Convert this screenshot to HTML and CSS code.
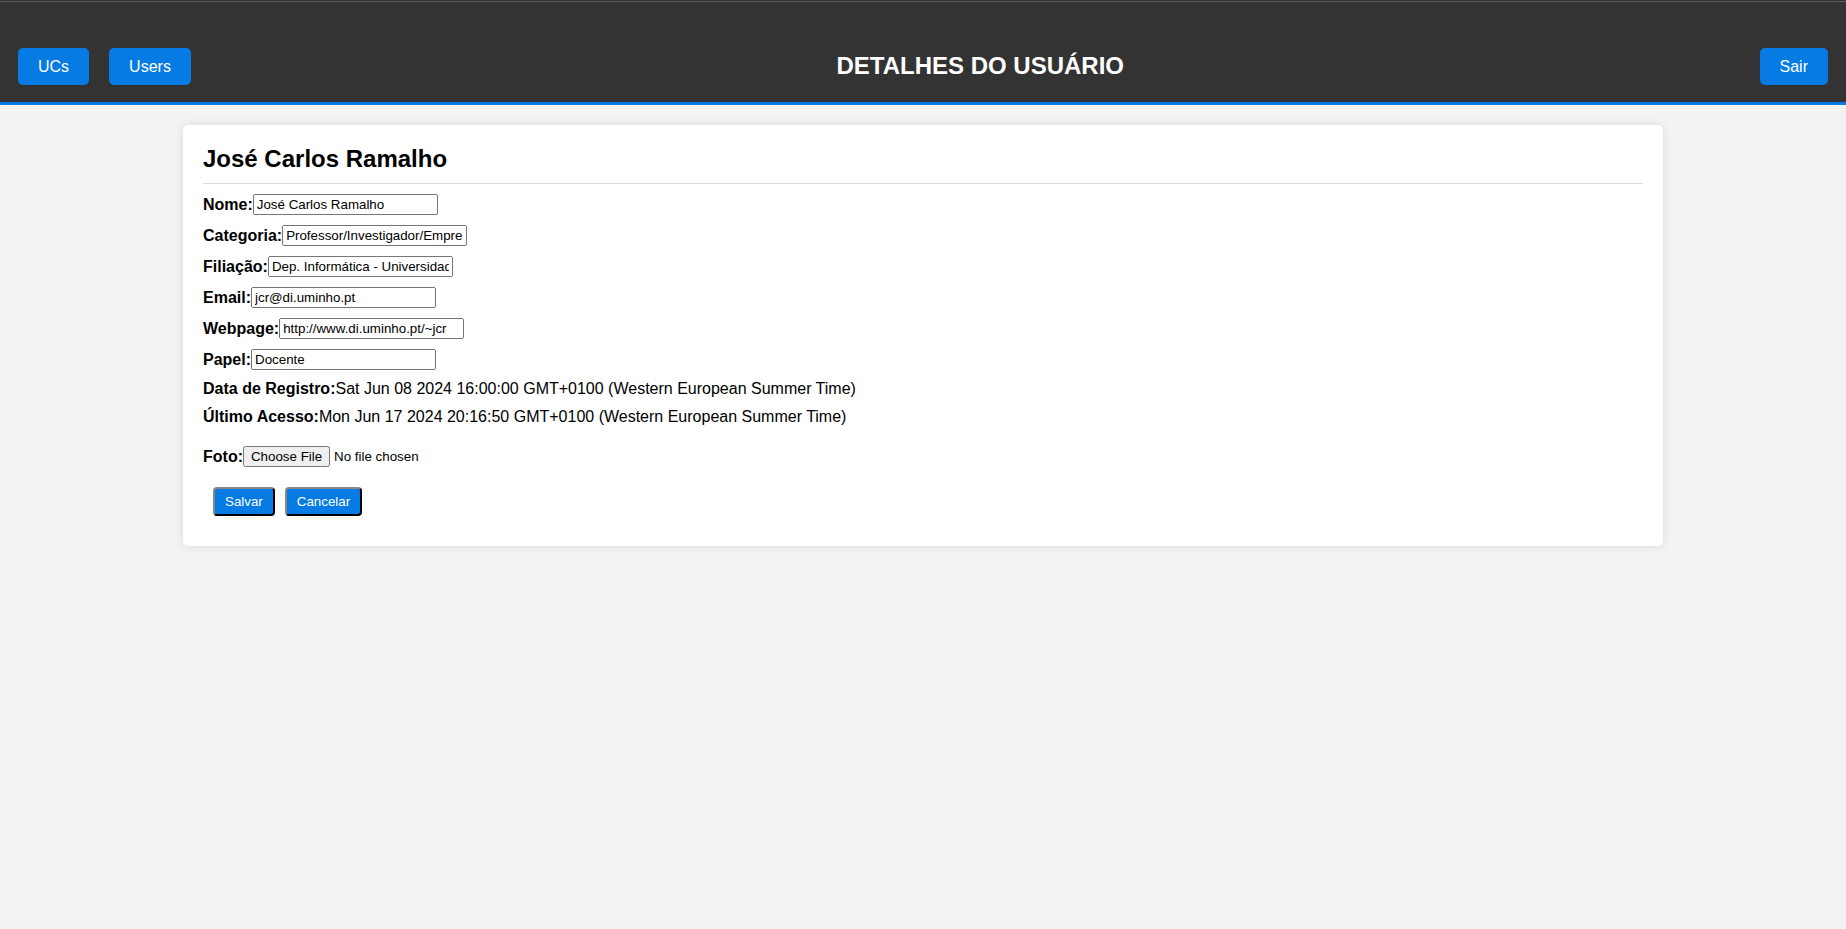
FILE: index.html
```html
<!DOCTYPE html>
<html lang="pt">
<head>
<meta charset="utf-8">
<title>Detalhes do Usuário</title>
<link rel="stylesheet" href="styles.css">
</head>
<body>
<header class="topbar">
  <div class="nav-group">
    <button class="nav-btn">UCs</button>
    <button class="nav-btn">Users</button>
  </div>
  <h1 class="page-title">DETALHES DO USUÁRIO</h1>
  <div class="nav-group">
    <button class="nav-btn">Sair</button>
  </div>
</header>
<main class="card">
  <h2 class="user-name">José Carlos Ramalho</h2>
  <form class="user-form">
    <div class="row"><label class="lbl">Nome:</label><input type="text" value="José Carlos Ramalho"></div>
    <div class="row"><label class="lbl">Categoria:</label><input type="text" value="Professor/Investigador/Empresário"></div>
    <div class="row"><label class="lbl">Filiação:</label><input type="text" value="Dep. Informática - Universidade do Minho"></div>
    <div class="row"><label class="lbl">Email:</label><input type="text" value="jcr@di.uminho.pt"></div>
    <div class="row"><label class="lbl">Webpage:</label><input type="text" value="http://www.di.uminho.pt/~jcr"></div>
    <div class="row"><label class="lbl">Papel:</label><input type="text" value="Docente"></div>
    <div class="text-row"><span class="lbl">Data de Registro:</span>Sat Jun 08 2024 16:00:00 GMT+0100 (Western European Summer Time)</div>
    <div class="text-row"><span class="lbl">Último Acesso:</span>Mon Jun 17 2024 20:16:50 GMT+0100 (Western European Summer Time)</div>
    <div class="row foto-row"><label class="lbl">Foto:</label><input type="file"></div>
    <div class="actions">
      <button type="button" class="act-btn">Salvar</button>
      <button type="button" class="act-btn">Cancelar</button>
    </div>
  </form>
</main>
</body>
</html>
```
FILE: styles.css
```css
html, body {
  margin: 0;
  padding: 0;
}
body {
  background: #f3f3f3;
  font-family: "Liberation Sans", Arial, sans-serif;
  color: #000;
}
.topbar {
  background: #333;
  box-shadow: inset 0 1px #333, inset 0 2px #5c5c5c;
  border-bottom: 3px solid #077be4;
  padding: 48px 8px 0;
  box-sizing: content-box;
  height: 54px;
  display: flex;
  justify-content: space-between;
  align-items: flex-start;
}
.nav-group {
  display: flex;
}
.nav-btn {
  margin: 0 10px;
  background: #077be4;
  color: #fff;
  border: none;
  border-radius: 5px;
  font-family: "Liberation Sans", Arial, sans-serif;
  font-size: 16px;
  line-height: 19px;
  padding: 9px 20px;
  cursor: pointer;
}
.page-title {
  margin: 4px 0 0 10px;
  color: #fff;
  font-size: 24px;
  line-height: 28px;
  font-weight: bold;
}
.card {
  display: block;
  max-width: 1440px;
  margin: 20px auto;
  padding: 20px;
  background: #fff;
  border-radius: 5px;
  box-shadow: 0 0 10px rgba(0, 0, 0, 0.1);
}
.user-name {
  margin: 0 0 10px;
  padding-bottom: 10px;
  border-bottom: 1px solid #ddd;
  font-size: 24px;
}
.user-form {
  margin: 0;
  font-size: 16px;
}
.row {
  display: flex;
  align-items: center;
  height: 21px;
  margin-bottom: 10px;
}
.text-row {
  height: 18px;
  line-height: 18px;
  margin-bottom: 10px;
}
.lbl {
  font-weight: bold;
}
.foto-row {
  margin-top: 20px;
}
.actions {
  display: flex;
  gap: 10px;
  margin-top: 20px;
  padding: 0 0 10px 10px;
}
.act-btn {
  background: #077be4;
  color: #fff;
  border: 2px outset #333;
  border-radius: 4px;
  padding: 5px 10px;
  font-family: "Liberation Sans", Arial, sans-serif;
  font-size: 13.333px;
  cursor: pointer;
}
```
